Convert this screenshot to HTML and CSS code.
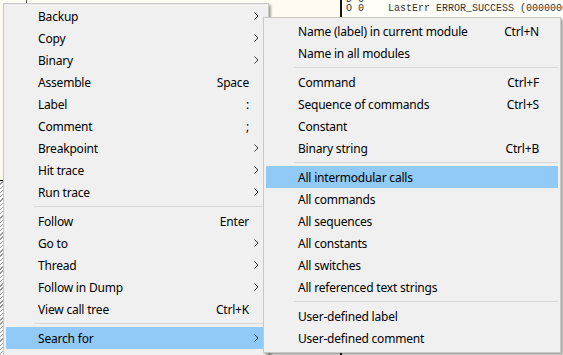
FILE: index.html
```html
<!DOCTYPE html>
<html lang="en">
<head>
    <title>Context Menu</title>
    <link rel="stylesheet" href="styles.css">
</head>
<body>
    <div class="app">
        <div class="gutter"></div>
        <div class="pane-code">
            <div class="col-addr"></div>
        </div>
        <div class="pane-regs">
            <div class="reg-line">D 0</div>
            <div class="reg-line">O 0    LastErr ERROR_SUCCESS (00000000)</div>
        </div>
    </div>

    <!-- main context menu -->
    <div class="menu menu-main">
        <div class="item"><span class="label">Backup</span><span class="arrow"><svg width="5" height="8" viewBox="0 0 5 8"><polyline points="0.5,0.5 4,4 0.5,7.5"/></svg></span></div>
        <div class="item"><span class="label">Copy</span><span class="arrow"><svg width="5" height="8" viewBox="0 0 5 8"><polyline points="0.5,0.5 4,4 0.5,7.5"/></svg></span></div>
        <div class="item"><span class="label">Binary</span><span class="arrow"><svg width="5" height="8" viewBox="0 0 5 8"><polyline points="0.5,0.5 4,4 0.5,7.5"/></svg></span></div>
        <div class="item"><span class="label">Assemble</span><span class="key">Space</span><span class="arrow"></span></div>
        <div class="item"><span class="label">Label</span><span class="key">:</span><span class="arrow"></span></div>
        <div class="item"><span class="label">Comment</span><span class="key">;</span><span class="arrow"></span></div>
        <div class="item"><span class="label">Breakpoint</span><span class="arrow"><svg width="5" height="8" viewBox="0 0 5 8"><polyline points="0.5,0.5 4,4 0.5,7.5"/></svg></span></div>
        <div class="item"><span class="label">Hit trace</span><span class="arrow"><svg width="5" height="8" viewBox="0 0 5 8"><polyline points="0.5,0.5 4,4 0.5,7.5"/></svg></span></div>
        <div class="item"><span class="label">Run trace</span><span class="arrow"><svg width="5" height="8" viewBox="0 0 5 8"><polyline points="0.5,0.5 4,4 0.5,7.5"/></svg></span></div>
        <div class="sep"></div>
        <div class="item"><span class="label">Follow</span><span class="key">Enter</span><span class="arrow"></span></div>
        <div class="item"><span class="label">Go to</span><span class="arrow"><svg width="5" height="8" viewBox="0 0 5 8"><polyline points="0.5,0.5 4,4 0.5,7.5"/></svg></span></div>
        <div class="item"><span class="label">Thread</span><span class="arrow"><svg width="5" height="8" viewBox="0 0 5 8"><polyline points="0.5,0.5 4,4 0.5,7.5"/></svg></span></div>
        <div class="item"><span class="label">Follow in Dump</span><span class="arrow"><svg width="5" height="8" viewBox="0 0 5 8"><polyline points="0.5,0.5 4,4 0.5,7.5"/></svg></span></div>
        <div class="item"><span class="label">View call tree</span><span class="key">Ctrl+K</span><span class="arrow"></span></div>
        <div class="sep"></div>
        <div class="item active"><span class="label">Search for</span><span class="arrow"><svg width="5" height="8" viewBox="0 0 5 8"><polyline points="0.5,0.5 4,4 0.5,7.5"/></svg></span></div>
        <div class="item"><span class="label">Analysis</span><span class="arrow"><svg width="5" height="8" viewBox="0 0 5 8"><polyline points="0.5,0.5 4,4 0.5,7.5"/></svg></span></div>
    </div>

    <!-- "Search for" submenu -->
    <div class="menu menu-sub">
        <div class="item"><span class="label">Name (label) in current module</span><span class="key">Ctrl+N</span><span class="arrow"></span></div>
        <div class="item"><span class="label">Name in all modules</span><span class="arrow"></span></div>
        <div class="sep"></div>
        <div class="item"><span class="label">Command</span><span class="key">Ctrl+F</span><span class="arrow"></span></div>
        <div class="item"><span class="label">Sequence of commands</span><span class="key">Ctrl+S</span><span class="arrow"></span></div>
        <div class="item"><span class="label">Constant</span><span class="arrow"></span></div>
        <div class="item"><span class="label">Binary string</span><span class="key">Ctrl+B</span><span class="arrow"></span></div>
        <div class="sep"></div>
        <div class="item active"><span class="label">All intermodular calls</span><span class="arrow"></span></div>
        <div class="item"><span class="label">All commands</span><span class="arrow"></span></div>
        <div class="item"><span class="label">All sequences</span><span class="arrow"></span></div>
        <div class="item"><span class="label">All constants</span><span class="arrow"></span></div>
        <div class="item"><span class="label">All switches</span><span class="arrow"></span></div>
        <div class="item"><span class="label">All referenced text strings</span><span class="arrow"></span></div>
        <div class="sep"></div>
        <div class="item"><span class="label">User-defined label</span><span class="arrow"></span></div>
        <div class="item"><span class="label">User-defined comment</span><span class="arrow"></span></div>
    </div>
</body>
</html>
```

FILE: styles.css
```css
:root {
    --page-bg: #fcf9ef;
    --menu-bg: #f0f0f0;
    --menu-border: #c8c8c8;
    --sep-color: #d7d7d7;
    --hover-bg: #91c9f7;
    --text-color: #000;
}

body {
    margin: 0;
    width: 563px;
    height: 355px;
    overflow: hidden;
    position: relative;
    background-color: var(--page-bg);
    font-family: 'Noto Sans', 'Noto Sans CJK KR', sans-serif;
    font-size: 12px;
    letter-spacing: -0.2px;
    color: var(--text-color);
}

/* background debugger window */
.app {
    display: flex;
    height: 100%;
}

.gutter {
    width: 3px;
    flex-shrink: 0;
    margin-top: 180px;
    border-top: 1px solid #000;
    background: repeating-linear-gradient(135deg, #fff 0 2px, #999 2px 3px);
}

.pane-code {
    width: 337px;
    flex-shrink: 0;
    background-color: #fffbf2;
    border-right: 2px solid #111;
}

.col-addr {
    width: 23px;
    height: 100%;
    border-right: 1px solid #555;
}

.pane-regs {
    flex: 1;
    min-width: 0;
    overflow: hidden;
    padding-left: 4px;
    background-color: #fffef8;
    font-family: 'Liberation Mono', monospace;
    font-size: 10px;
    line-height: 9px;
    letter-spacing: 0;
    color: #333;
}

.reg-line {
    white-space: pre;
}

.reg-line:first-child {
    margin-top: -5px;
}

/* menus */
.menu {
    position: absolute;
    box-sizing: border-box;
    padding: 2px;
    background-color: var(--menu-bg);
    border: 1px solid var(--menu-border);
    box-shadow: 2px 2px 2px rgba(0, 0, 0, 0.35);
}

.menu-main {
    left: 3px;
    top: 3px;
    width: 266px;
    padding-top: 1px;
}

.menu-sub {
    left: 263px;
    top: 17px;
    width: 298px;
    height: 336px;
}

.item {
    display: flex;
    align-items: center;
    height: 22px;
    padding-left: 32px;
    white-space: nowrap;
}

.item.active {
    background-color: var(--hover-bg);
}

.label {
    flex: 1;
}

.key {
    text-align: right;
}

.arrow {
    width: 17px;
    display: flex;
    padding-left: 5px;
    box-sizing: border-box;
}

.menu-sub .arrow {
    width: 19px;
}

.arrow svg polyline {
    fill: none;
    stroke: #333;
    stroke-width: 1;
}

.sep {
    height: 7px;
    margin-left: 28px;
    box-sizing: border-box;
    padding-top: 3px;
}

.sep::after {
    content: '';
    display: block;
    height: 1px;
    background-color: var(--sep-color);
}
```
